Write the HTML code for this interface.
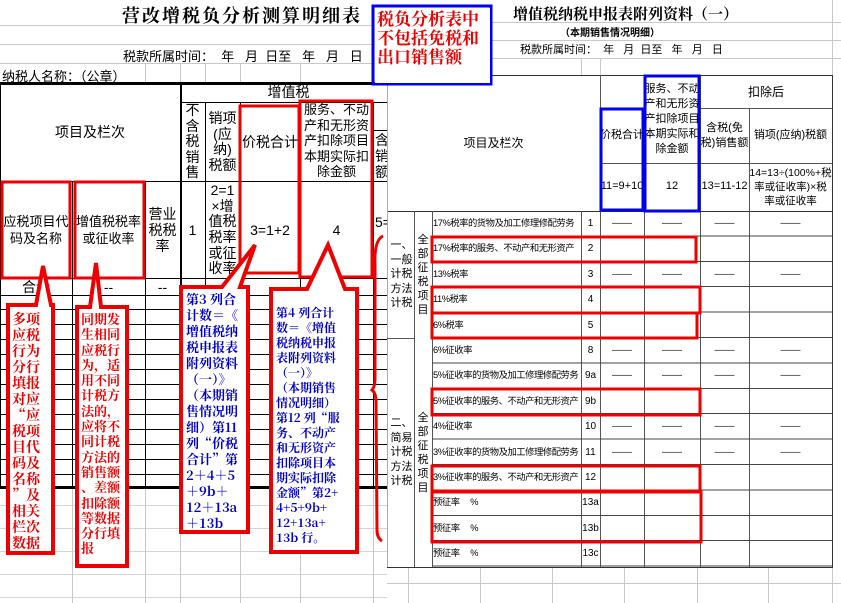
<!DOCTYPE html>
<html><head><meta charset="utf-8">
<style>
*{margin:0;padding:0;box-sizing:border-box}
body{width:841px;height:603px;position:relative;overflow:hidden;background:#fff;font-family:"Liberation Sans","Noto Sans CJK SC",sans-serif;color:#000}
.a{position:absolute}
.c{position:absolute;display:flex;align-items:center;justify-content:center;text-align:center;line-height:1.2}
.h{position:absolute;height:1px;background:#000}
.v{position:absolute;width:1px;background:#000}
.gh{position:absolute;height:1px;background:#c8c8c8}
.gv{position:absolute;width:1px;background:#c8c8c8}
.L{font-size:14px}
.R{font-size:11px}
.t{position:absolute;font-weight:bold;font-size:14px;line-height:15.6px;font-family:"Noto Serif CJK SC","Noto Sans CJK SC",serif}
</style></head><body>

<div class="a" style="left:0;top:0;width:841px;height:603px;background-image:repeating-linear-gradient(to bottom,transparent 0,transparent 22px,#d4d4d4 22px,#d4d4d4 23px)"></div>

<div class="a" style="left:0;top:0;width:387px;height:83px;background:#fff"></div>
<div class="gh" style="left:0;top:25px;width:387px"></div>
<div class="gh" style="left:0;top:44px;width:387px"></div>
<div class="gh" style="left:0;top:63px;width:387px"></div>
<div class="gv" style="left:145px;top:63px;height:20px"></div>
<div class="gv" style="left:180px;top:63px;height:20px"></div>
<div class="gv" style="left:205px;top:63px;height:20px"></div>
<div class="gv" style="left:240px;top:63px;height:20px"></div>
<div class="gv" style="left:300px;top:63px;height:20px"></div>
<div class="a" style="left:122px;top:2px;font-size:18px;font-weight:bold;letter-spacing:2px;font-family:'Noto Serif CJK SC',serif;white-space:nowrap">营改增税负分析测算明细表</div>
<div class="a" style="left:123px;top:46px;white-space:nowrap;font-size:13px">税款所属时间： &nbsp;年 &nbsp; 月 &nbsp;日至 &nbsp; 年 &nbsp; 月 &nbsp; 日</div>
<div class="a" style="left:2px;top:66px;white-space:nowrap;font-size:13px">纳税人名称：（公章）</div>

<div class="a" style="left:0;top:83px;width:387px;height:404px;background:#fff"></div>
<div class="a" style="left:0;top:295px;width:387px;height:192px;background-image:repeating-linear-gradient(to bottom,transparent 0,transparent 14px,#000 14px,#000 15px)"></div>
<div class="h" style="left:0;top:82px;width:387px;height:3px"></div>
<div class="h" style="left:0;top:486px;width:387px;height:3px"></div>
<div class="v" style="left:0;top:83px;height:404px"></div>
<div class="v" style="left:180px;top:83px;height:404px;width:2px"></div>
<div class="h" style="left:180px;top:102px;width:207px"></div>
<div class="h" style="left:0;top:181px;width:387px"></div>
<div class="h" style="left:0;top:278px;width:387px"></div>
<div class="h" style="left:0;top:295px;width:387px"></div>
<div class="v" style="left:72px;top:181px;height:306px"></div>
<div class="v" style="left:145px;top:181px;height:306px"></div>
<div class="v" style="left:205px;top:102px;height:385px"></div>
<div class="v" style="left:240px;top:102px;height:385px"></div>
<div class="v" style="left:300px;top:102px;height:385px"></div>
<div class="v" style="left:373px;top:102px;height:385px"></div>
<div class="h" style="left:373px;top:130px;width:14px"></div>

<div class="c L" style="left:0;top:83px;width:180px;height:98px">项目及栏次</div>
<div class="c L" style="left:180px;top:83px;width:207px;height:19px;padding-left:10px">增值税</div>
<div class="c L" style="left:180px;top:103px;width:25px;height:78px;line-height:15.5px">不<br>含<br>税<br>销<br>售</div>
<div class="c L" style="left:205px;top:103px;width:35px;height:78px;line-height:15.5px">销项<br>(应<br>纳)<br>税额</div>
<div class="c L" style="left:240px;top:103px;width:60px;height:78px">价税合计</div>
<div class="c" style="left:300px;top:101px;width:73px;height:80px;line-height:15.6px;font-size:13px">服务、不动<br>产和无形资<br>产扣除项目<br>本期实际扣<br>除金额</div>
<div class="a L" style="left:375px;top:132px;line-height:16px">含<br>销<br>额</div>
<div class="c" style="left:0;top:182px;width:72px;height:96px;line-height:17px;font-size:13px">应税项目代<br>码及名称</div>
<div class="c" style="left:72px;top:182px;width:73px;height:96px;line-height:17px;font-size:13px">增值税税率<br>或征收率</div>
<div class="c L" style="left:145px;top:182px;width:35px;height:96px;line-height:16px">营业<br>税税<br>率</div>
<div class="c L" style="left:180px;top:182px;width:25px;height:96px">1</div>
<div class="c L" style="left:205px;top:182px;width:35px;height:96px;line-height:15.6px">2=1<br>×增<br>值税<br>税率<br>或征<br>收率</div>
<div class="c L" style="left:240px;top:182px;width:60px;height:96px">3=1+2</div>
<div class="c L" style="left:300px;top:182px;width:73px;height:96px">4</div>
<div class="a L" style="left:375px;top:214px">5=</div>
<div class="c L" style="left:0;top:279px;width:72px;height:16px">合计</div>
<div class="c L" style="left:72px;top:279px;width:73px;height:16px">--</div>
<div class="c L" style="left:145px;top:279px;width:35px;height:16px">--</div>

<div class="gv" style="left:72px;top:489px;height:114px"></div>
<div class="gv" style="left:145px;top:489px;height:114px"></div>
<div class="gv" style="left:180px;top:489px;height:114px"></div>
<div class="gv" style="left:240px;top:489px;height:114px"></div>
<div class="gv" style="left:300px;top:489px;height:114px"></div>
<div class="gv" style="left:373px;top:489px;height:114px"></div>

<div class="a" style="left:387px;top:0;width:454px;height:603px;background:#fff"></div>
<div class="gh" style="left:387px;top:22px;width:454px"></div>
<div class="gh" style="left:387px;top:40px;width:454px"></div>
<div class="gh" style="left:387px;top:58px;width:454px"></div>
<div class="gv" style="left:581px;top:58px;height:17px"></div>
<div class="gv" style="left:600px;top:58px;height:17px"></div>
<div class="gv" style="left:832px;top:0;height:603px"></div>
<div class="a" style="left:513px;top:3px;font-size:15px;font-weight:bold;white-space:nowrap;font-family:'Noto Serif CJK SC',serif">增值税纳税申报表附列资料（一）</div>
<div class="a" style="left:560px;top:24px;font-size:10px;font-weight:bold;white-space:nowrap">（本期销售情况明细）</div>
<div class="a R" style="left:520px;top:41px;white-space:nowrap">税款所属时间： &nbsp;年 &nbsp; 月 &nbsp;日至 &nbsp; 年 &nbsp; 月 &nbsp; 日</div>

<div class="h" style="left:387px;top:75px;width:446px;background:#333"></div>
<div class="h" style="left:387px;top:211px;width:446px;background:#333"></div>
<div class="h" style="left:387px;top:567px;width:446px;background:#333"></div>
<div class="v" style="left:387px;top:75px;height:492px;background:#aaa"></div>
<div class="v" style="left:600px;top:75px;height:492px;background:#555"></div>
<div class="v" style="left:644px;top:75px;height:492px;background:#555"></div>
<div class="v" style="left:700px;top:75px;height:492px;background:#555"></div>
<div class="v" style="left:749px;top:108px;height:459px;background:#555"></div>
<div class="v" style="left:832px;top:75px;height:492px;background:#333"></div>
<div class="h" style="left:700px;top:108px;width:132px;background:#555"></div>
<div class="h" style="left:600px;top:163px;width:232px;background:#555"></div>
<div class="v" style="left:414px;top:211px;height:356px;background:#555"></div>
<div class="v" style="left:432px;top:211px;height:356px;background:#555"></div>
<div class="v" style="left:581px;top:211px;height:356px;background:#555"></div>
<div class="h" style="left:387px;top:338px;width:27px;background:#555"></div>
<div class="a" style="left:432px;top:211px;width:400px;height:356px;background-image:repeating-linear-gradient(to bottom,transparent 0,transparent 24.4px,#444 24.4px,#444 25.4px)"></div>

<div class="c R" style="left:387px;top:76px;width:213px;height:135px;font-size:12px">项目及栏次</div>
<div class="c R" style="left:600px;top:108px;width:44px;height:55px">价税合计</div>
<div class="c R" style="left:644px;top:76px;width:56px;height:87px;line-height:15px">服务、不动<br>产和无形资<br>产扣除项目<br>本期实际和<br>除金额</div>
<div class="c R" style="left:700px;top:76px;width:132px;height:32px;font-size:12px">扣除后</div>
<div class="c R" style="left:700px;top:108px;width:49px;height:55px;line-height:15px">含税(免<br>税)销售额</div>
<div class="c R" style="left:749px;top:108px;width:83px;height:55px">销项(应纳)税额</div>
<div class="c R" style="left:600px;top:163px;width:44px;height:48px">11=9+10</div>
<div class="c R" style="left:644px;top:163px;width:56px;height:48px">12</div>
<div class="c R" style="left:700px;top:163px;width:49px;height:48px">13=11-12</div>
<div class="c R" style="left:749px;top:163px;width:83px;height:48px;line-height:14px;font-size:10.5px">14=13÷(100%+税<br>率或征收率)×税<br>率或征收率</div>

<div class="c R" style="left:389px;top:211px;width:25px;height:127px;line-height:14.5px">一、<br>一般<br>计税<br>方法<br>计税</div>
<div class="c R" style="left:414px;top:211px;width:18px;height:127px;line-height:14px">全<br>部<br>征<br>税<br>项<br>目</div>
<div class="c R" style="left:389px;top:338px;width:25px;height:229px;line-height:14.5px">二、<br>简易<br>计税<br>方法<br>计税</div>
<div class="c R" style="left:414px;top:338px;width:18px;height:229px;line-height:14px">全<br>部<br>征<br>税<br>项<br>目</div>

<div class="a" style="left:433px;top:211px;width:148px;font-size:9.3px;letter-spacing:-0.45px;line-height:25.4px;white-space:nowrap;overflow:hidden">17%税率的货物及加工修理修配劳务<br>17%税率的服务、不动产和无形资产<br>13%税率<br>11%税率<br>6%税率<br>6%征收率<br>5%征收率的货物及加工修理修配劳务<br>5%征收率的服务、不动产和无形资产<br>4%征收率<br>3%征收率的货物及加工修理修配劳务<br>3%征收率的服务、不动产和无形资产<br>预征率 &nbsp; &nbsp; %<br>预征率 &nbsp; &nbsp; %<br>预征率 &nbsp; &nbsp; %</div>
<div class="a" style="left:581px;top:211px;width:19px;font-size:10px;line-height:25.4px;text-align:center">1<br>2<br>3<br>4<br>5<br>8<br>9a<br>9b<br>10<br>11<br>12<br>13a<br>13b<br>13c</div>
<div class="a" style="left:600px;top:211px;width:232px;font-size:10px;line-height:25.4px;color:#222">
<div style="display:flex;height:25.4px"><span style="width:44px;text-align:center">——</span><span style="width:56px;text-align:center">——</span><span style="width:49px;text-align:center">——</span><span style="width:83px;text-align:center">——</span></div>
<div style="height:25.4px"></div>
<div style="display:flex;height:25.4px"><span style="width:44px;text-align:center">——</span><span style="width:56px;text-align:center">——</span><span style="width:49px;text-align:center">——</span><span style="width:83px;text-align:center">——</span></div>
<div style="height:50.8px"></div>
<div style="display:flex;height:25.4px"><span style="width:44px;text-align:center">——</span><span style="width:56px;text-align:center">——</span><span style="width:49px;text-align:center">——</span><span style="width:83px;text-align:center">——</span></div>
<div style="display:flex;height:25.4px"><span style="width:44px;text-align:center">——</span><span style="width:56px;text-align:center">——</span><span style="width:49px;text-align:center">——</span><span style="width:83px;text-align:center">——</span></div>
<div style="height:25.4px"></div>
<div style="display:flex;height:25.4px"><span style="width:44px;text-align:center">——</span><span style="width:56px;text-align:center">——</span><span style="width:49px;text-align:center">——</span><span style="width:83px;text-align:center">——</span></div>
<div style="display:flex;height:25.4px"><span style="width:44px;text-align:center">——</span><span style="width:56px;text-align:center">——</span><span style="width:49px;text-align:center">——</span><span style="width:83px;text-align:center">——</span></div>
</div>

<div class="gh" style="left:387px;top:583px;width:454px"></div>
<div class="gv" style="left:408px;top:568px;height:35px"></div>
<div class="gv" style="left:480px;top:568px;height:35px"></div>
<div class="gv" style="left:552px;top:568px;height:35px"></div>
<div class="gv" style="left:624px;top:568px;height:35px"></div>
<div class="gv" style="left:697px;top:568px;height:35px"></div>
<div class="gv" style="left:768px;top:568px;height:35px"></div>

<svg class="a" style="left:0;top:0" width="841" height="603" viewBox="0 0 841 603">
<g fill="none" stroke="#ee0000" stroke-width="3">
<rect x="240" y="106" width="59" height="167"/>
<rect x="300" y="101" width="72" height="176"/>
<rect x="2" y="182" width="68" height="96"/>
<rect x="75" y="182" width="69" height="96"/>
<path d="M383 236 Q374 240 375 265 L375 378 Q375 387 372 390 Q376 393 376 402 L377 530 Q377 538 382 541"/>
<rect x="432" y="237" width="264" height="25"/>
<rect x="432" y="287" width="268" height="26"/>
<rect x="432" y="313" width="265" height="25"/>
<rect x="432" y="389" width="268" height="26"/>
<rect x="432" y="466" width="268" height="25"/>
<rect x="432" y="492" width="269" height="50"/>
</g>
<g fill="#fff" stroke="#ee0000" stroke-width="4">
<polygon points="8,305 36,305 43,266 51,305 53,305 53,553 8,553"/>
<polygon points="77,307 90,307 96,263 101,307 127,307 127,566 77,566"/>
<polygon points="181,287 222,287 255,245 240,287 248,287 248,532 181,532"/>
<polygon points="271,289 307,289 328,245 345,289 357,289 357,552 271,552"/>
</g>
<g fill="none" stroke="#0000ee" stroke-width="3">
<rect x="601" y="109" width="42" height="101"/>
<rect x="645" y="76" width="54" height="135"/>
<rect x="373" y="6" width="118" height="78"/>
</g>
</svg>
<div class="a" style="left:375px;top:8px;width:115px;height:75px;background:#fff"></div>
<div class="a" style="left:377px;top:8px;color:#ee0000;font-weight:bold;font-size:17px;line-height:19px;font-family:'Noto Serif CJK SC',serif;white-space:nowrap">税负分析表中<br>不包括免税和<br>出口销售额</div>

<div class="t" style="left:12px;top:311px;color:#ee0000;line-height:16px">多项<br>应税<br>行为<br>分行<br>填报<br>对应<br>“应<br>税项<br>目代<br>码及<br>名称<br>”及<br>相关<br>栏次<br>数据</div>
<div class="t" style="left:81px;top:311px;color:#ee0000;font-size:13px;line-height:15.3px">同期发<br>生相同<br>应税行<br>为，适<br>用不同<br>计税方<br>法的，<br>应将不<br>同计税<br>方法的<br>销售额<br>、差额<br>扣除额<br>等数据<br>分行填<br>报</div>
<div class="t" style="left:186px;top:291px;color:#0000cc;font-size:13px;line-height:16px;white-space:nowrap">第3 列合<br>计数＝《<br>增值税纳<br>税申报表<br>附列资料<br>（一）》<br>（本期销<br>售情况明<br>细）第11<br>列“价税<br>合计”第<br>2＋4＋5<br>＋9b＋<br>12＋13a<br>＋13b</div>
<div class="t" style="left:276px;top:305px;color:#0000cc;font-size:12px;line-height:15px;white-space:nowrap">第4 列合计<br>数＝《增值<br>税纳税申报<br>表附列资料<br>（一）》<br>（本期销售<br>情况明细）<br>第12 列“服<br>务、不动产<br>和无形资产<br>扣除项目本<br>期实际扣除<br>金额”第2+<br>4+5+9b+<br>12+13a+<br>13b 行。</div>
</body></html>
